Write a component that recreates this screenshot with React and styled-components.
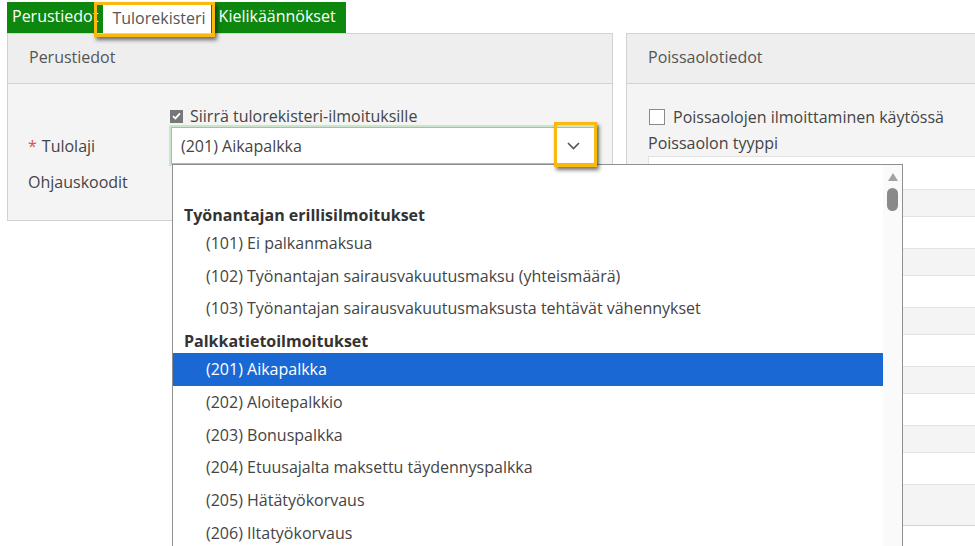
import React from 'react';
import styled, { createGlobalStyle } from 'styled-components';

const GlobalStyle = createGlobalStyle`
  html, body {
    margin: 0;
    padding: 0;
    background: #ffffff;
  }
  body {
    font-family: "Open Sans", "Noto Sans", sans-serif;
    font-size: 16px;
    color: #444444;
    overflow: hidden;
  }
  * { box-sizing: border-box; }
`;

const Page = styled.div`
  width: 975px;
  height: 546px;
  overflow: hidden;
  padding: 2px 0 0 7px;
`;

const TabBar = styled.div`
  display: inline-flex;
  align-items: flex-end;
  height: 31px;
  background: #0e870e;
  padding-right: 5px;
`;

const Tab = styled.div`
  position: relative;
  height: ${p => (p.$active ? '29px' : '31px')};
  display: flex;
  align-items: center;
  padding: ${p => (p.$active ? '0 5px 2px 9px' : `0 5px 3px ${p.$first ? 5 : 8}px`)};
  background: ${p => (p.$active ? '#ffffff' : 'transparent')};
  color: ${p => (p.$active ? '#555555' : '#ffffff')};
  white-space: nowrap;
  line-height: 20px;
`;

/* Amber highlight frame laid over a control */
const Callout = styled.span`
  position: absolute;
  top: ${p => p.$top}px;
  bottom: ${p => p.$bottom}px;
  left: ${p => p.$left}px;
  right: ${p => p.$right}px;
  border: 3px solid #fbb80f;
  box-shadow: 2px 3px 4px rgba(0, 0, 0, 0.55);
  pointer-events: none;
  z-index: 20;
`;

const Panels = styled.div`
  display: flex;
  align-items: flex-start;
  gap: 13px;
`;

const Panel = styled.section`
  flex: 0 0 ${p => p.$width}px;
  border: 1px solid #d2d2d2;
  border-right-color: ${p => (p.$open ? 'transparent' : '#d2d2d2')};
  background: #f4f4f4;
`;

const PanelHeader = styled.header`
  height: 50px;
  display: flex;
  align-items: center;
  padding: 0 0 3px 21px;
  background: #eeeeee;
  border-bottom: 1px solid #d2d2d2;
  color: #555555;
`;

const FormGrid = styled.div`
  display: grid;
  grid-template-columns: 143px 426px;
  grid-template-rows: 16px 37px 30px;
  row-gap: 3px;
  padding: 24px 0 23px 20px;
  align-items: center;
`;

const Label = styled.div`
  color: #444444;
  line-height: 20px;
  white-space: nowrap;
`;

const Required = styled.span`
  color: #d9534f;
  margin-right: 5px;
`;

const CheckRow = styled.label`
  display: flex;
  align-items: center;
  gap: 7px;
  margin-left: -1px;
  color: #444444;
  line-height: 20px;
  white-space: nowrap;
`;

const Box = styled.span`
  flex: 0 0 auto;
  width: ${p => p.$size}px;
  height: ${p => p.$size}px;
  display: flex;
  align-items: center;
  justify-content: center;
  background: ${p => (p.$checked ? '#777777' : '#ffffff')};
  border: 1px solid ${p => (p.$checked ? '#777777' : '#8a8a8a')};
`;

const Select = styled.div`
  position: relative;
  height: 37px;
  display: flex;
  align-items: stretch;
  background: #ffffff;
  border: 1px solid #93cf93;
  box-shadow: 0 0 0 2px rgba(150, 210, 150, 0.45);
`;

const SelectValue = styled.div`
  flex: 1;
  display: flex;
  align-items: center;
  padding-left: 9px;
  color: #444444;
`;

const ChevronButton = styled.div`
  position: relative;
  width: 39px;
  display: flex;
  align-items: center;
  justify-content: center;
  padding-right: 6px;
`;

const Dropdown = styled.div`
  position: absolute;
  top: 36px;
  left: 0px;
  width: 731px;
  height: 400px;
  display: flex;
  background: #ffffff;
  border: 1px solid #8f8f8f;
  z-index: 10;
`;

const OptionList = styled.ul`
  flex: 1;
  list-style: none;
  margin: 0;
  padding: 34px 0 0;
`;

const GroupLabel = styled.li`
  height: 28px;
  padding: 3px 0 0 11px;
  display: flex;
  align-items: center;
  font-weight: 700;
  color: #333333;
  white-space: nowrap;
`;

const Option = styled.li`
  height: 32.75px;
  padding: 0 0 1px 33px;
  display: flex;
  align-items: center;
  white-space: nowrap;
  background: ${p => (p.$selected ? '#1a68d3' : 'transparent')};
  color: ${p => (p.$selected ? '#ffffff' : '#444444')};
`;

const ScrollRail = styled.div`
  flex: 0 0 19px;
  background: #fafafa;
  display: flex;
  flex-direction: column;
  align-items: center;
  padding-top: 8px;
  gap: 7px;
`;

const ScrollArrow = styled.span`
  width: 0;
  height: 0;
  border-left: 5px solid transparent;
  border-right: 5px solid transparent;
  border-bottom: 8px solid #a2a2a2;
`;

const ScrollThumb = styled.span`
  width: 11px;
  height: 23px;
  border-radius: 6px;
  background: #8a8a8a;
`;

const SideBody = styled.div`
  padding: 23px 0 0 21px;
  display: flex;
  flex-direction: column;
`;

const SideCheck = styled(CheckRow)`
  margin-left: 1px;
  gap: 8px;
`;

const SideLabel = styled(Label)`
  margin-top: 6px;
`;

const Fields = styled.div`
  display: flex;
  flex-direction: column;
  gap: 26px;
  margin-top: 3px;
  padding-bottom: 40px;
`;

const Field = styled.div`
  height: ${p => (p.$tall ? 34 : 33)}px;
  background: #ffffff;
  border: 1px solid #e2e2e2;
  border-right: none;
`;

const CheckMark = () => (
  <svg width="9" height="8" viewBox="0 0 9 8" aria-hidden="true">
    <path d="M1 4.2 L3.4 6.4 L8 1.4" fill="none" stroke="#ffffff" strokeWidth="1.8" />
  </svg>
);

const Chevron = () => (
  <svg width="13" height="8" viewBox="0 0 13 8" aria-hidden="true">
    <path d="M1 1 L6.5 6.5 L12 1" fill="none" stroke="#555555" strokeWidth="1.6" />
  </svg>
);

const groups = [
  {
    title: 'Työnantajan erillisilmoitukset',
    items: [
      '(101) Ei palkanmaksua',
      '(102) Työnantajan sairausvakuutusmaksu (yhteismäärä)',
      '(103) Työnantajan sairausvakuutusmaksusta tehtävät vähennykset',
    ],
  },
  {
    title: 'Palkkatietoilmoitukset',
    items: [
      '(201) Aikapalkka',
      '(202) Aloitepalkkio',
      '(203) Bonuspalkka',
      '(204) Etuusajalta maksettu täydennyspalkka',
      '(205) Hätätyökorvaus',
      '(206) Iltatyökorvaus',
    ],
  },
];

const selected = '(201) Aikapalkka';

export default function App() {
  return (
    <>
      <GlobalStyle />
      <Page>
        <TabBar>
          <Tab $first>Perustiedot</Tab>
          <Tab $active>
            Tulorekisteri
            <Callout $top={-2} $bottom={-4} $left={-9} $right={-4} />
          </Tab>
          <Tab>Kielikäännökset</Tab>
        </TabBar>

        <Panels>
          <Panel $width={606}>
            <PanelHeader>Perustiedot</PanelHeader>
            <FormGrid>
              <div />
              <CheckRow>
                <Box $size={13} $checked>
                  <CheckMark />
                </Box>
                Siirrä tulorekisteri-ilmoituksille
              </CheckRow>

              <Label>
                <Required>*</Required>Tulolaji
              </Label>
              <Select>
                <SelectValue>{selected}</SelectValue>
                <ChevronButton>
                  <Chevron />
                  <Callout $top={-6} $bottom={-4} $left={-3} $right={-1} />
                </ChevronButton>
                <Dropdown>
                  <OptionList>
                    {groups.map(g => (
                      <React.Fragment key={g.title}>
                        <GroupLabel>{g.title}</GroupLabel>
                        {g.items.map(item => (
                          <Option key={item} $selected={item === selected}>
                            {item}
                          </Option>
                        ))}
                      </React.Fragment>
                    ))}
                  </OptionList>
                  <ScrollRail>
                    <ScrollArrow />
                    <ScrollThumb />
                  </ScrollRail>
                </Dropdown>
              </Select>

              <Label>Ohjauskoodit</Label>
              <div />
            </FormGrid>
          </Panel>

          <Panel $width={380} $open>
            <PanelHeader>Poissaolotiedot</PanelHeader>
            <SideBody>
              <SideCheck>
                <Box $size={16} />
                Poissaolojen ilmoittaminen käytössä
              </SideCheck>
              <SideLabel>Poissaolon tyyppi</SideLabel>
              <Fields>
                <Field $tall />
                <Field />
                <Field />
                <Field />
                <Field />
                <Field />
              </Fields>
            </SideBody>
          </Panel>
        </Panels>
      </Page>
    </>
  );
}
